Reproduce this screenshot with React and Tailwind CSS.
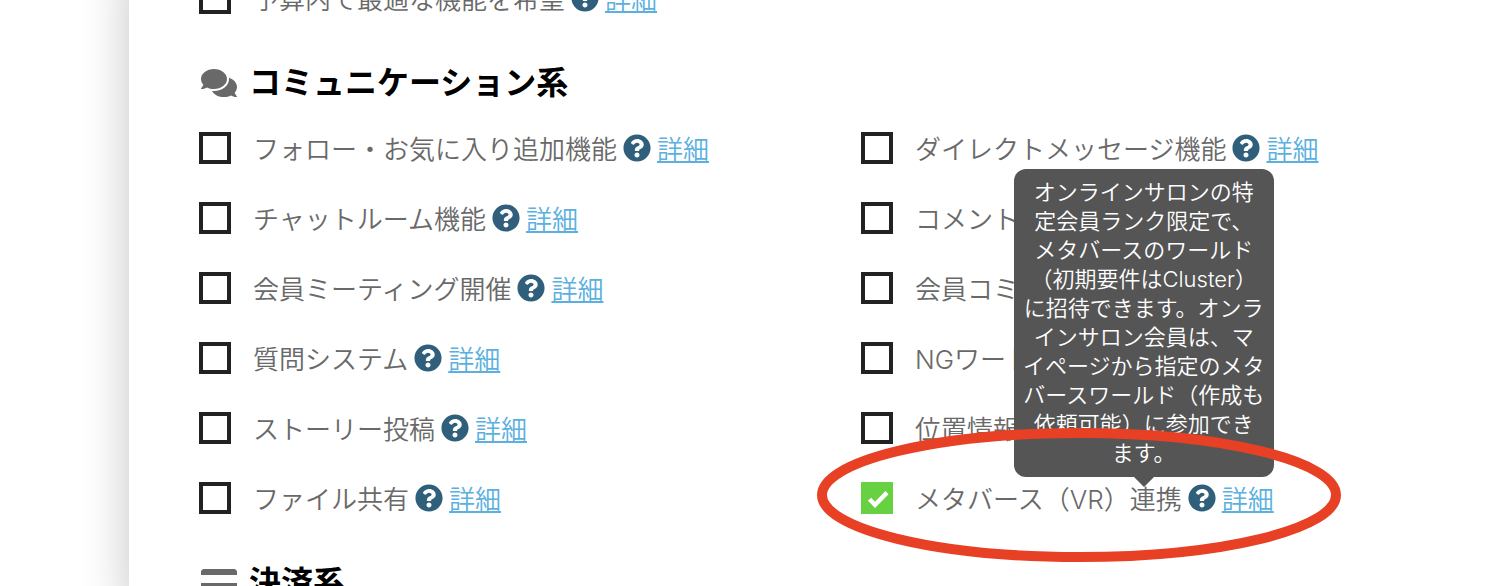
import { FaComments, FaCreditCard, FaQuestionCircle } from 'react-icons/fa'

const communicationFeatures = [
  { id: 'follow', label: 'フォロー・お気に入り追加機能' },
  { id: 'direct-message', label: 'ダイレクトメッセージ機能' },
  { id: 'chat-room', label: 'チャットルーム機能' },
  { id: 'comment', label: 'コメント' },
  { id: 'meeting', label: '会員ミーティング開催' },
  { id: 'community', label: '会員コミュニティ' },
  { id: 'question', label: '質問システム' },
  { id: 'ng-word', label: 'NGワード' },
  { id: 'story', label: 'ストーリー投稿' },
  { id: 'location', label: '位置情報' },
  { id: 'file-share', label: 'ファイル共有' },
  {
    id: 'metaverse',
    label: 'メタバース（VR）連携',
    checked: true,
    highlighted: true,
    tooltip: [
      'オンラインサロンの特',
      '定会員ランク限定で、',
      'メタバースのワールド',
      '（初期要件はCluster）',
      'に招待できます。オンラ',
      'インサロン会員は、マ',
      'イページから指定のメタ',
      'バースワールド（作成も',
      '依頼可能）に参加でき',
      'ます。'
    ]
  }
]

const Checkbox = ({ id, defaultChecked }) => (
  <span className="grid w-8 h-8 shrink-0">
    <input
      id={id}
      type="checkbox"
      defaultChecked={defaultChecked}
      className="peer col-start-1 row-start-1 w-8 h-8 appearance-none border-4 border-[#222222] bg-white checked:border-[#67d141] checked:bg-[#67d141]"
    />
    <svg
      viewBox="0 0 32 32"
      className="hidden peer-checked:block col-start-1 row-start-1 w-8 h-8 pointer-events-none"
      fill="none"
      stroke="white"
      strokeWidth="4.4"
    >
      <path d="M8.5 17.3 L14 22.8 L26 10.6" />
    </svg>
  </span>
)

const Tooltip = ({ id, lines }) => (
  <span
    id={id}
    role="tooltip"
    className="absolute right-0 bottom-full z-10 w-[260px] py-[9px] rounded-xl bg-[#555555] text-center text-[22px] leading-[29px] text-white whitespace-nowrap"
  >
    {lines.map((line) => (
      <span key={line} className="block">{line}</span>
    ))}
    <span className="absolute top-full left-1/2 -translate-x-1/2 border-x-10 border-t-10 border-x-transparent border-t-[#555555]"></span>
  </span>
)

const FeatureItem = ({ id, label, checked, tooltip, highlighted }) => (
  <li className="relative flex items-center h-[70px]">
    <Checkbox id={id} defaultChecked={checked} />
    <label htmlFor={id} className="ml-[22px] pt-1 whitespace-nowrap">{label}</label>
    <span className="relative flex items-center gap-1.5 ml-1.5">
      <FaQuestionCircle className="w-7 h-7 text-[#2f5f7a]" />
      <a
        href="#"
        aria-describedby={tooltip ? `${id}-tip` : undefined}
        className="pt-1 text-[#5bb0e0] underline decoration-2 underline-offset-2 whitespace-nowrap"
      >
        詳細
      </a>
      {tooltip && <Tooltip id={`${id}-tip`} lines={tooltip} />}
    </span>
    {highlighted && (
      <svg
        viewBox="0 0 524 136"
        className="absolute -left-11 -top-9 z-20 w-[524px] h-[136px] pointer-events-none"
        fill="none"
      >
        <ellipse cx="262" cy="68" rx="257" ry="62" stroke="#e84025" strokeWidth="10" />
      </svg>
    )}
  </li>
)

const SectionHeading = ({ icon: Icon, children }) => (
  <h2 className="flex items-center gap-3 h-[60px] mt-5 pl-0.5 text-[32px] font-bold text-black">
    <Icon className="w-9 h-8 text-[#696969]" />
    {children}
  </h2>
)

const App = () => {
  return (
    <div className="h-screen overflow-hidden bg-white pl-[129px] font-['Inter','Noto_Sans_CJK_JP',sans-serif]">
      <main className="min-h-full -mt-[37px] pl-[70px] bg-white shadow-[0_0_46px_rgba(0,0,0,0.23)] text-[26px] leading-[38px] font-[350] text-[#696969]">
        <ul>
          <FeatureItem id="budget" label="予算内で最適な機能を希望" />
        </ul>

        <section>
          <SectionHeading icon={FaComments}>コミュニケーション系</SectionHeading>
          <ul className="grid grid-cols-2 gap-x-[11px]">
            {communicationFeatures.map((feature) => (
              <FeatureItem key={feature.id} {...feature} />
            ))}
          </ul>
        </section>

        <section>
          <SectionHeading icon={FaCreditCard}>決済系</SectionHeading>
        </section>
      </main>
    </div>
  )
}

export default App
